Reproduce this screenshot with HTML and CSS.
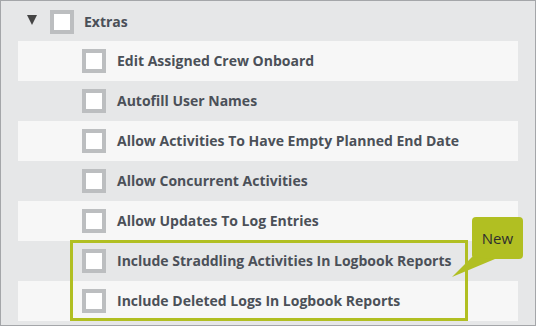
FILE: index.html
```html
<!DOCTYPE html>
<html lang="en">
<head>
    <meta charset="UTF-8">
    <title>Extras</title>
    <link rel="stylesheet" href="styles.css">
</head>
<body>
    <div class="panel">
        <div class="group-head">
            <span class="caret"></span>
            <span class="check"></span>
            <span class="label">Extras</span>
        </div>
        <div class="rows">
            <div class="row"><span class="check"></span><span class="label">Edit Assigned Crew Onboard</span></div>
            <div class="row"><span class="check"></span><span class="label">Autofill User Names</span></div>
            <div class="row"><span class="check"></span><span class="label">Allow Activities To Have Empty Planned End Date</span></div>
            <div class="row"><span class="check"></span><span class="label">Allow Concurrent Activities</span></div>
            <div class="row"><span class="check"></span><span class="label">Allow Updates To Log Entries</span></div>
            <div class="new-group">
                <div class="row"><span class="check"></span><span class="label">Include Straddling Activities In Logbook Reports</span></div>
                <div class="row"><span class="check"></span><span class="label">Include Deleted Logs In Logbook Reports</span></div>
                <div class="highlight"></div>
                <div class="bubble">
                    New
                    <svg class="tail" width="46" height="22" viewBox="0 0 46 22">
                        <polygon points="20,0 43,2 0,20" fill="#b1bf22"/>
                    </svg>
                </div>
            </div>
        </div>
    </div>
</body>
</html>
```

FILE: styles.css
```css
body {
    margin: 0;
    font-family: 'Open Sans', 'Noto Sans', sans-serif;
}
.panel {
    width: 536px;
    height: 326px;
    box-sizing: border-box;
    border: 1px solid #a4a6a9;
    background-color: #e6e7e8;
    overflow: hidden;
}
.group-head {
    height: 40px;
    display: flex;
    align-items: center;
    padding-left: 26px;
}
.caret {
    width: 0;
    height: 0;
    border-left: 5px solid transparent;
    border-right: 5px solid transparent;
    border-top: 10px solid #454545;
    margin-right: 13px;
    margin-top: -2px;
}
.check {
    width: 16px;
    height: 16px;
    border: 4px solid #bcbec0;
    background-color: white;
    flex-shrink: 0;
}
.group-head .check {
    margin-top: 2px;
}
.label {
    font-size: 14px;
    font-weight: 700;
    color: #4b5058;
    margin-left: 11px;
    margin-bottom: 2px;
}
.group-head .label {
    margin-left: 10px;
    margin-bottom: 0;
}
.rows {
    margin-left: 17px;
    width: 500px;
}
.row {
    height: 40px;
    display: flex;
    align-items: center;
    padding-left: 64px;
}
.rows > .row:nth-child(odd),
.new-group .row:nth-child(2) {
    background-color: #f7f7f7;
}
.new-group {
    position: relative;
}
.highlight {
    position: absolute;
    left: 52px;
    top: -1px;
    width: 398px;
    height: 81px;
    box-sizing: border-box;
    border: 3px solid #b1bf22;
}
.bubble {
    position: absolute;
    left: 454px;
    top: -24px;
    width: 51px;
    height: 42px;
    box-sizing: border-box;
    padding-top: 11px;
    text-align: center;
    background-color: #b1bf22;
    border-radius: 4px;
    font-size: 15px;
    color: #2e2e2e;
}
.tail {
    position: absolute;
    left: -20px;
    top: 40px;
}
```
